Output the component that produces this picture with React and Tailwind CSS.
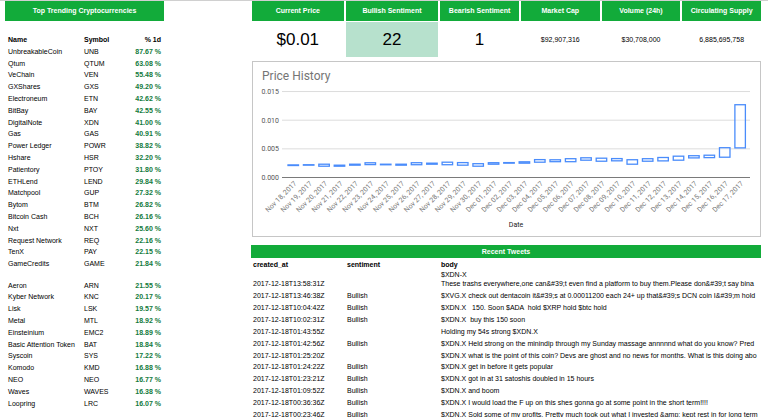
import React from "react";

const coins = [
  ["UnbreakableCoin", "UNB", "87.67"],
  ["Qtum", "QTUM", "63.08"],
  ["VeChain", "VEN", "55.48"],
  ["GXShares", "GXS", "49.20"],
  ["Electroneum", "ETN", "42.62"],
  ["BitBay", "BAY", "42.55"],
  ["DigitalNote", "XDN", "41.00"],
  ["Gas", "GAS", "40.91"],
  ["Power Ledger", "POWR", "38.82"],
  ["Hshare", "HSR", "32.20"],
  ["Patientory", "PTOY", "31.80"],
  ["ETHLend", "LEND", "29.84"],
  ["Matchpool", "GUP", "27.32"],
  ["Bytom", "BTM", "26.82"],
  ["Bitcoin Cash", "BCH", "26.16"],
  ["Nxt", "NXT", "25.60"],
  ["Request Network", "REQ", "22.16"],
  ["TenX", "PAY", "22.15"],
  ["GameCredits", "GAME", "21.84"],
  ["Aeron", "ARN", "21.55"],
  ["Kyber Network", "KNC", "20.17"],
  ["Lisk", "LSK", "19.57"],
  ["Metal", "MTL", "18.92"],
  ["Einsteinium", "EMC2", "18.89"],
  ["Basic Attention Token", "BAT", "18.84"],
  ["Syscoin", "SYS", "17.22"],
  ["Komodo", "KMD", "16.88"],
  ["NEO", "NEO", "16.77"],
  ["Waves", "WAVES", "16.38"],
  ["Loopring", "LRC", "16.07"],
];

const stats = [
  { label: "Current Price", value: "$0.01", big: true },
  { label: "Bullish Sentiment", value: "22", big: true, highlight: true },
  { label: "Bearish Sentiment", value: "1", big: true },
  { label: "Market Cap", value: "$92,907,316" },
  { label: "Volume (24h)", value: "$30,708,000" },
  { label: "Circulating Supply", value: "6,885,695,758" },
];

// [date, low, high], prices in thousandths of a dollar
const candles = [
  ["Nov 18, 2017", 2.09, 2.2],
  ["Nov 19, 2017", 2.15, 2.23],
  ["Nov 20, 2017", 1.97, 2.32],
  ["Nov 21, 2017", 1.97, 2.15],
  ["Nov 22, 2017", 2.15, 2.32],
  ["Nov 23, 2017", 2.25, 2.57],
  ["Nov 24, 2017", 2.22, 2.32],
  ["Nov 25, 2017", 2.15, 2.32],
  ["Nov 26, 2017", 2.23, 2.58],
  ["Nov 27, 2017", 2.32, 2.5],
  ["Nov 28, 2017", 2.23, 2.67],
  ["Nov 29, 2017", 2.15, 2.6],
  ["Nov 30, 2017", 1.97, 2.41],
  ["Dec 01, 2017", 2.32, 2.58],
  ["Dec 02, 2017", 2.5, 2.6],
  ["Dec 03, 2017", 2.5, 2.74],
  ["Dec 04, 2017", 2.67, 3.12],
  ["Dec 05, 2017", 2.76, 3.09],
  ["Dec 06, 2017", 2.76, 3.28],
  ["Dec 07, 2017", 3.02, 3.44],
  ["Dec 08, 2017", 2.84, 3.37],
  ["Dec 09, 2017", 2.91, 3.3],
  ["Dec 10, 2017", 2.32, 3.1],
  ["Dec 11, 2017", 2.84, 3.28],
  ["Dec 12, 2017", 2.9, 3.49],
  ["Dec 13, 2017", 3.02, 3.72],
  ["Dec 14, 2017", 3.42, 3.8],
  ["Dec 15, 2017", 3.47, 3.89],
  ["Dec 16, 2017", 3.54, 5.2],
  ["Dec 17, 2017", 5.17, 12.7],
];

const tweets = [
  [
    "2017-12-18T13:58:31Z",
    "",
    "$XDN-X\nThese trashs everywhere,one can&#39;t even find a platform to buy them.Please don&#39;t say bina",
  ],
  [
    "2017-12-18T13:46:38Z",
    "Bullish",
    "$XVG.X check out dentacoin it&#39;s at 0.00011200 each 24+ up that&#39;s DCN coin I&#39;m hold",
  ],
  ["2017-12-18T10:04:42Z", "Bullish", "$XDN.X   150. Soon $ADA  hold $XRP hold $btc hold"],
  ["2017-12-18T10:02:31Z", "Bullish", "$XDN.X  buy this 150 soon"],
  ["2017-12-18T01:43:55Z", "", "Holding my 54s strong $XDN.X"],
  [
    "2017-12-18T01:42:56Z",
    "Bullish",
    "$XDN.X Held strong on the minindip through my Sunday massage annnnnd what do you know? Pred",
  ],
  [
    "2017-12-18T01:25:20Z",
    "",
    "$XDN.X what is the point of this coin? Devs are ghost and no news for months. What is this doing abo",
  ],
  ["2017-12-18T01:24:22Z", "Bullish", "$XDN.X get in before it gets popular"],
  ["2017-12-18T01:23:21Z", "Bullish", "$XDN.X got in at 31 satoshis doubled in 15 hours"],
  ["2017-12-18T01:09:52Z", "Bullish", "$XDN.X and boom"],
  [
    "2017-12-18T00:36:36Z",
    "Bullish",
    "$XDN.X I would load the F up on this shes gonna go at some point in the short term!!!!",
  ],
  [
    "2017-12-18T00:23:46Z",
    "Bullish",
    "$XDN.X Sold some of my profits. Pretty much took out what I invested &amp; kept rest in for long term",
  ],
];

const TrendingTable = () => (
  <section className="w-[159px] shrink-0">
    <h2 className="bg-[#12ab3a] text-white font-bold text-center leading-5">
      Top Trending Cryptocurrencies
    </h2>
    <table className="mt-3 w-full h-[375px] table-fixed whitespace-nowrap">
      <thead>
        <tr className="h-[11px] align-bottom">
          <th className="w-[76px] p-0 pl-[3px] text-left">Name</th>
          <th className="p-0 pl-[3px] text-left">Symbol</th>
          <th className="w-10 p-0 pr-[3px] text-right">% 1d</th>
        </tr>
      </thead>
      <tbody>
        {coins.map(([name, symbol, change]) => (
          <tr
            key={symbol}
            className={name === "Aeron" ? "h-5 align-bottom" : "h-[11px] align-bottom"}
          >
            <td className="p-0 pl-[3px]">{name}</td>
            <td className="p-0 pl-[3px]">{symbol}</td>
            <td className="p-0 pr-[3px] text-right font-bold text-[#127a3c]">{change} %</td>
          </tr>
        ))}
      </tbody>
    </table>
  </section>
);

const Stats = () => (
  <section className="ml-px grid grid-cols-[92fr_93fr_79fr_79fr_79fr_79fr] gap-x-0.5 text-center">
    {stats.map((s) => (
      <div key={s.label}>
        <h3 className="bg-[#12ab3a] text-white font-bold leading-5 whitespace-nowrap">{s.label}</h3>
        <p
          className={`mt-px h-[35px] leading-[35px] ${s.big ? "text-[17px]" : ""} ${
            s.highlight ? "bg-[#b7e1cd]" : ""
          }`}
        >
          {s.value}
        </p>
      </div>
    ))}
  </section>
);

const PriceChart = () => {
  const baseY = 115.5;
  const y = (v) => baseY - v * 5.73;
  const x = (i) => 40 + i * 15.41;

  return (
    <section className="mt-1 ml-px border border-[#c6c6c6]">
      <svg viewBox="0 0 507 174" className="block w-full font-[Roboto,sans-serif]">
        <text x="9" y="18" fontSize="12" fill="#757575">
          Price History
        </text>
        {[15, 10, 5, 0].map((v) => (
          <g key={v}>
            <line
              x1="29"
              x2="497"
              y1={y(v)}
              y2={y(v)}
              stroke={v === 0 ? "#7a7a7a" : "#dcdcdc"}
              strokeWidth="1"
            />
            <text x="26" y={y(v) + 2.5} fontSize="7" fill="#555555" textAnchor="end">
              {(v / 1000).toFixed(3)}
            </text>
          </g>
        ))}
        {candles.map(([date, low, high], i) => (
          <g key={date}>
            <rect
              x={x(i) - 5}
              y={y(high)}
              width="10.5"
              height={y(low) - y(high)}
              fill="#ffffff"
              fillOpacity="0.4"
              stroke="#4a8cfb"
              strokeWidth="1.3"
            />
            <text
              transform={`translate(${x(i) + 4} 122) rotate(-45)`}
              fontSize="7"
              fill="#777777"
              textAnchor="end"
            >
              {date}
            </text>
          </g>
        ))}
        <text x="263" y="165" fontSize="7" fill="#222222" textAnchor="middle">
          Date
        </text>
      </svg>
    </section>
  );
};

const Tweets = () => (
  <section className="mt-2">
    <h2 className="bg-[#12ab3a] text-white font-bold text-center leading-[13px]">Recent Tweets</h2>
    <table className="w-full h-[161px] table-fixed">
      <thead>
        <tr className="h-[11px] align-bottom text-left">
          <th className="w-[94px] p-0 pl-0.5">created_at</th>
          <th className="w-[94px] p-0 pl-0.5">sentiment</th>
          <th className="p-0 pl-0.5">body</th>
        </tr>
      </thead>
      <tbody>
        {tweets.map(([createdAt, sentiment, body]) => (
          <tr key={createdAt} className="h-[11px] align-bottom">
            <td className="p-0 pl-0.5">{createdAt}</td>
            <td className="p-0 pl-0.5">{sentiment}</td>
            <td className="p-0 pl-0.5 whitespace-pre">{body}</td>
          </tr>
        ))}
      </tbody>
    </table>
  </section>
);

const App = () => {
  return (
    <div className="flex h-screen overflow-hidden border-t border-[#d0d0d0] bg-white pl-[5px] pr-[7px] font-['Liberation_Sans',Arial,sans-serif] text-[7px] leading-[9px] text-black">
      <TrendingTable />
      <main className="ml-[87px] min-w-0 flex-1">
        <Stats />
        <PriceChart />
        <Tweets />
      </main>
    </div>
  );
};

export default App;
